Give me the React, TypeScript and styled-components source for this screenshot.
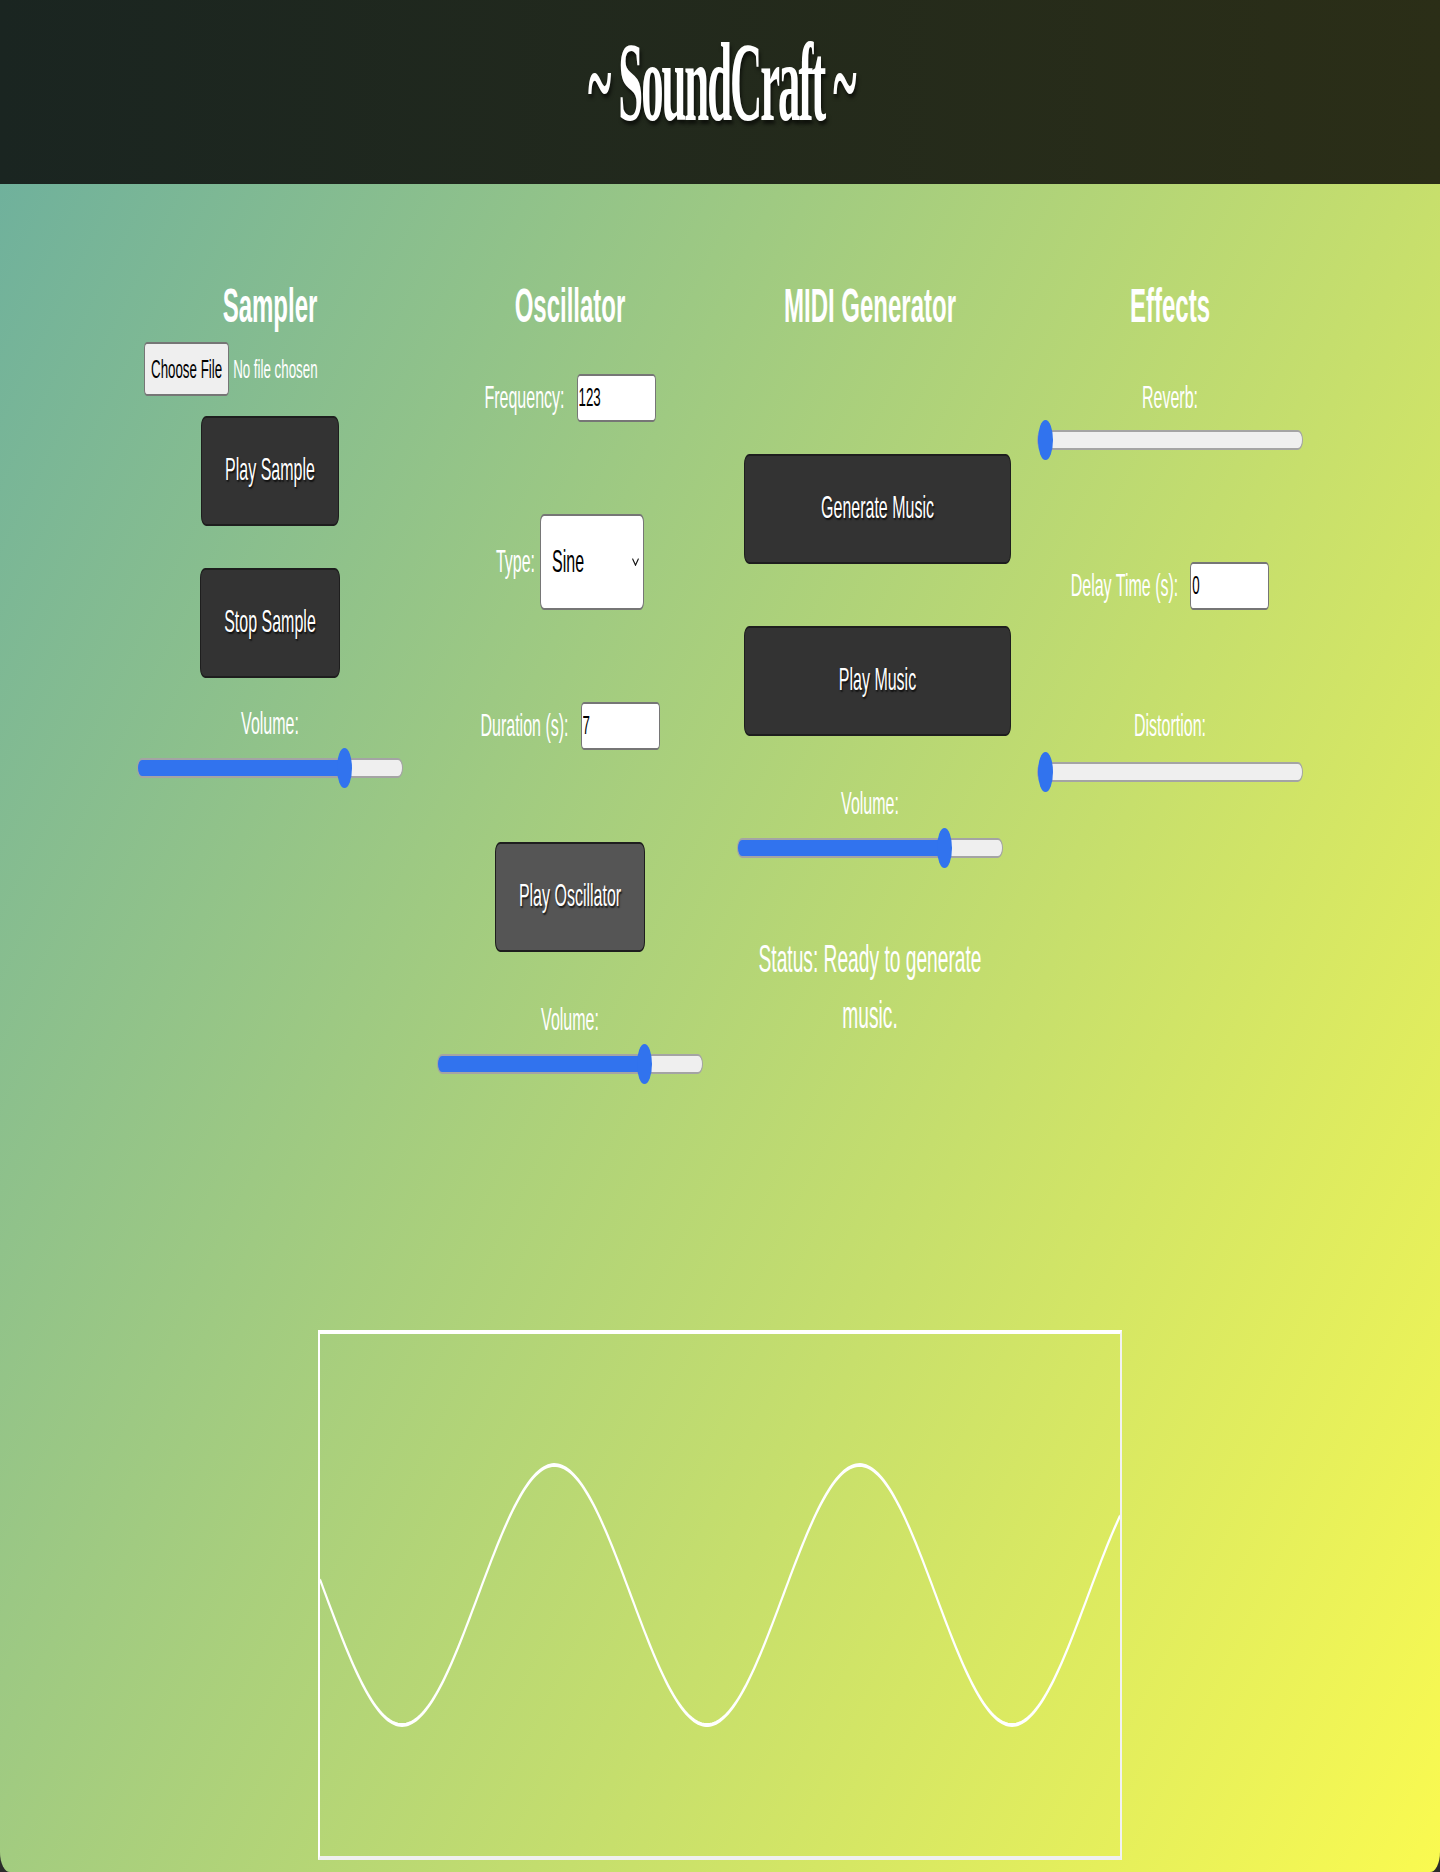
import React from 'react';
import styled, { createGlobalStyle } from 'styled-components';

const GlobalStyle = createGlobalStyle`
  html, body {
    margin: 0;
    padding: 0;
    background: #2b2b2b;
  }
  #root {
    width: 1440px;
  }
`;

/* The layout box is the full window; the page inside is drawn at its
   CSS size and stretched vertically 2x, as in the reference capture. */
const Frame = styled.div`
  width: 1440px;
  height: 1872px;
`;

const Page = styled.div`
  width: 1440px;
  height: 936px;
  transform: scaleY(2);
  transform-origin: 0 0;
  background: linear-gradient(135deg, #6aae9f 0%, #fafa50 100%);
  border-radius: 0 0 10px 10px;
  font-family: "Liberation Sans", Arial, sans-serif;
  color: #fff;
`;

const Header = styled.header`
  height: 92px;
  box-sizing: border-box;
  padding-bottom: 10px;
  display: flex;
  align-items: center;
  justify-content: center;
  background: linear-gradient(to right, #1a2521, #2b2e17);
`;

const Title = styled.h1`
  display: inline-block;
  margin: 0;
  padding-left: 3px;
  font-family: "Liberation Serif", "Times New Roman", serif;
  font-weight: 700;
  font-size: 56px;
  line-height: 56px;
  letter-spacing: -2.6px;
  color: #fff;
  transform: scaleX(0.8);
  text-shadow: 2px 2px 3px rgba(0, 0, 0, 0.6);
`;

const Main = styled.main`
  display: flex;
  flex-direction: column;
  align-items: center;
  padding-top: 47px;
`;

const Columns = styled.div`
  display: grid;
  grid-template-columns: repeat(4, 300px);
  align-items: start;
`;

const Column = styled.section`
  display: flex;
  flex-direction: column;
  align-items: center;
`;

const SectionTitle = styled.h2`
  margin: 0;
  font-size: 24px;
  line-height: 27.6px;
  font-weight: 700;
`;

const FileInput = styled.input.attrs({ type: 'file' })<{ $mt: number }>`
  margin: ${(p) => p.$mt}px 0 0;
  padding: 0;
  width: 252px;
  height: 27px;
  color: #fff;
  font: 13.33px "Liberation Sans", Arial, sans-serif;
  &::file-selector-button {
    height: 27px;
    margin: 0 4px 0 0;
    padding: 0 6px;
    border: 1px solid #767676;
    border-radius: 3px;
    background: #efefef;
    color: #000;
    font: inherit;
  }
`;

const ActionButton = styled.button<{ $mt: number; $tone?: 'dark' | 'mid'; $wide?: boolean }>`
  margin: ${(p) => p.$mt}px 0 0 ${(p) => (p.$wide ? 15 : 0)}px;
  ${(p) => (p.$wide ? 'width: 267px;' : '')}
  height: 55px;
  padding: 0 23px;
  font-family: "Liberation Sans", Arial, sans-serif;
  font-size: 16px;
  color: #fff;
  background: ${(p) => (p.$tone === 'mid' ? '#555555' : '#333333')};
  border: 1px solid #1e1e1e;
  border-radius: 5px;
  text-shadow: 1px 1px 1px rgba(0, 0, 0, 0.7);
  cursor: pointer;
`;

const FieldLabel = styled.label<{ $mt: number }>`
  display: block;
  margin-top: ${(p) => p.$mt}px;
  font-size: 16px;
  line-height: 18.4px;
`;

const Slider = styled.input.attrs({ type: 'range', min: 0, max: 100 })<{ $mt: number; $fill: number }>`
  -webkit-appearance: none;
  appearance: none;
  display: block;
  margin: ${(p) => p.$mt}px 0 0;
  padding: 0;
  width: 266px;
  height: 20px;
  background: transparent;
  &::-webkit-slider-runnable-track {
    height: 10px;
    box-sizing: border-box;
    border: 1px solid #a4a4a4;
    border-radius: 5px;
    background: linear-gradient(
      to right,
      #3173ee 0,
      #3173ee calc(7.5px + ${(p) => p.$fill} * (100% - 15px)),
      #efefef calc(7.5px + ${(p) => p.$fill} * (100% - 15px))
    );
  }
  &::-webkit-slider-thumb {
    -webkit-appearance: none;
    appearance: none;
    width: 15px;
    height: 20px;
    margin-top: -6px;
    border: none;
    border-radius: 50%;
    background: #3173ee;
  }
`;

const FieldRow = styled.div<{ $mt: number }>`
  display: flex;
  align-items: center;
  margin-top: ${(p) => p.$mt}px;
  font-size: 16px;
  line-height: 18.4px;
`;

const TextInput = styled.input`
  box-sizing: border-box;
  width: 79px;
  height: 24px;
  margin: 0 0 0 12px;
  padding: 0 1px;
  border: 1px solid #767676;
  border-radius: 3px;
  background: #fff;
  color: #000;
  font: 13.33px "Liberation Sans", Arial, sans-serif;
`;

const SelectBox = styled.div`
  position: relative;
  margin-left: 5px;
  display: flex;
`;

const Select = styled.select`
  appearance: none;
  -webkit-appearance: none;
  box-sizing: border-box;
  width: 104px;
  height: 48px;
  margin: 0;
  padding: 0 20px 0 11px;
  border: 1px solid #767676;
  border-radius: 4px;
  background: #fff;
  color: #000;
  font: 16px "Liberation Sans", Arial, sans-serif;
`;

const Chevron = styled.svg`
  position: absolute;
  right: 5px;
  top: 50%;
  width: 7px;
  height: 4px;
  margin-top: -2px;
  pointer-events: none;
`;

const Status = styled.p<{ $mt: number }>`
  margin: ${(p) => p.$mt}px 0 0;
  max-width: 266px;
  text-align: center;
  font-size: 19.2px;
  line-height: 28px;
`;

const Scope = styled.div`
  margin-top: 123px;
  width: 800px;
  height: 261px;
  border: 2px solid #ffffff;
  border-right-color: #f2f2f2;
  border-bottom-color: #f0f0f0;
`;

const Wave = styled.svg`
  display: block;
  width: 800px;
  height: 261px;
`;

function wavePath(): string {
  const pts: string[] = [];
  for (let x = 0; x <= 800; x += 2) {
    const y = 130.5 + 65 * Math.cos((2 * Math.PI * (x - 82)) / 305);
    pts.push(`${x === 0 ? 'M' : 'L'}${x} ${y.toFixed(2)}`);
  }
  return pts.join(' ');
}

export default function App() {
  const d = wavePath();
  return (
    <>
      <GlobalStyle />
      <Frame>
        <Page>
          <Header>
            <Title>~ SoundCraft ~</Title>
          </Header>
          <Main>
            <Columns>
              <Column>
                <SectionTitle>Sampler</SectionTitle>
                <FileInput $mt={4.4} />
                <ActionButton $mt={10}>Play Sample</ActionButton>
                <ActionButton $mt={21}>Stop Sample</ActionButton>
                <FieldLabel $mt={14}>Volume:</FieldLabel>
                <Slider $mt={2.6} $fill={0.8} defaultValue={80} />
              </Column>
              <Column>
                <SectionTitle>Oscillator</SectionTitle>
                <FieldRow $mt={20.4}>
                  <span>Frequency:</span>
                  <TextInput type="number" defaultValue={123} />
                </FieldRow>
                <FieldRow $mt={46}>
                  <span>Type:</span>
                  <SelectBox>
                    <Select defaultValue="sine">
                      <option value="sine">Sine</option>
                      <option value="square">Square</option>
                      <option value="sawtooth">Sawtooth</option>
                      <option value="triangle">Triangle</option>
                    </Select>
                    <Chevron viewBox="0 0 7 4">
                      <path d="M0.5 0.3 L3.5 3.6 L6.5 0.3" fill="none" stroke="#111" strokeWidth="0.9" />
                    </Chevron>
                  </SelectBox>
                </FieldRow>
                <FieldRow $mt={46}>
                  <span>Duration (s):</span>
                  <TextInput type="number" defaultValue={7} />
                </FieldRow>
                <ActionButton $mt={46} $tone="mid">Play Oscillator</ActionButton>
                <FieldLabel $mt={25}>Volume:</FieldLabel>
                <Slider $mt={2.6} $fill={0.8} defaultValue={80} />
              </Column>
              <Column>
                <SectionTitle>MIDI Generator</SectionTitle>
                <ActionButton $mt={60.4} $wide>Generate Music</ActionButton>
                <ActionButton $mt={31} $wide>Play Music</ActionButton>
                <FieldLabel $mt={25.3}>Volume:</FieldLabel>
                <Slider $mt={2.3} $fill={0.8} defaultValue={80} />
                <Status $mt={31.85}>Status: Ready to generate music.</Status>
              </Column>
              <Column>
                <SectionTitle>Effects</SectionTitle>
                <FieldLabel $mt={23.3}>Reverb:</FieldLabel>
                <Slider $mt={1.5} $fill={0} defaultValue={0} />
                <FieldRow $mt={51.2}>
                  <span>Delay Time (s):</span>
                  <TextInput type="number" defaultValue={0} />
                </FieldRow>
                <FieldLabel $mt={49.5}>Distortion:</FieldLabel>
                <Slider $mt={2.7} $fill={0} defaultValue={0} />
              </Column>
            </Columns>
            <Scope>
              <Wave viewBox="0 0 800 261" preserveAspectRatio="none">
                <path d={d} fill="none" stroke="#ffffff" strokeWidth="1.9" />
              </Wave>
            </Scope>
          </Main>
        </Page>
      </Frame>
    </>
  );
}
